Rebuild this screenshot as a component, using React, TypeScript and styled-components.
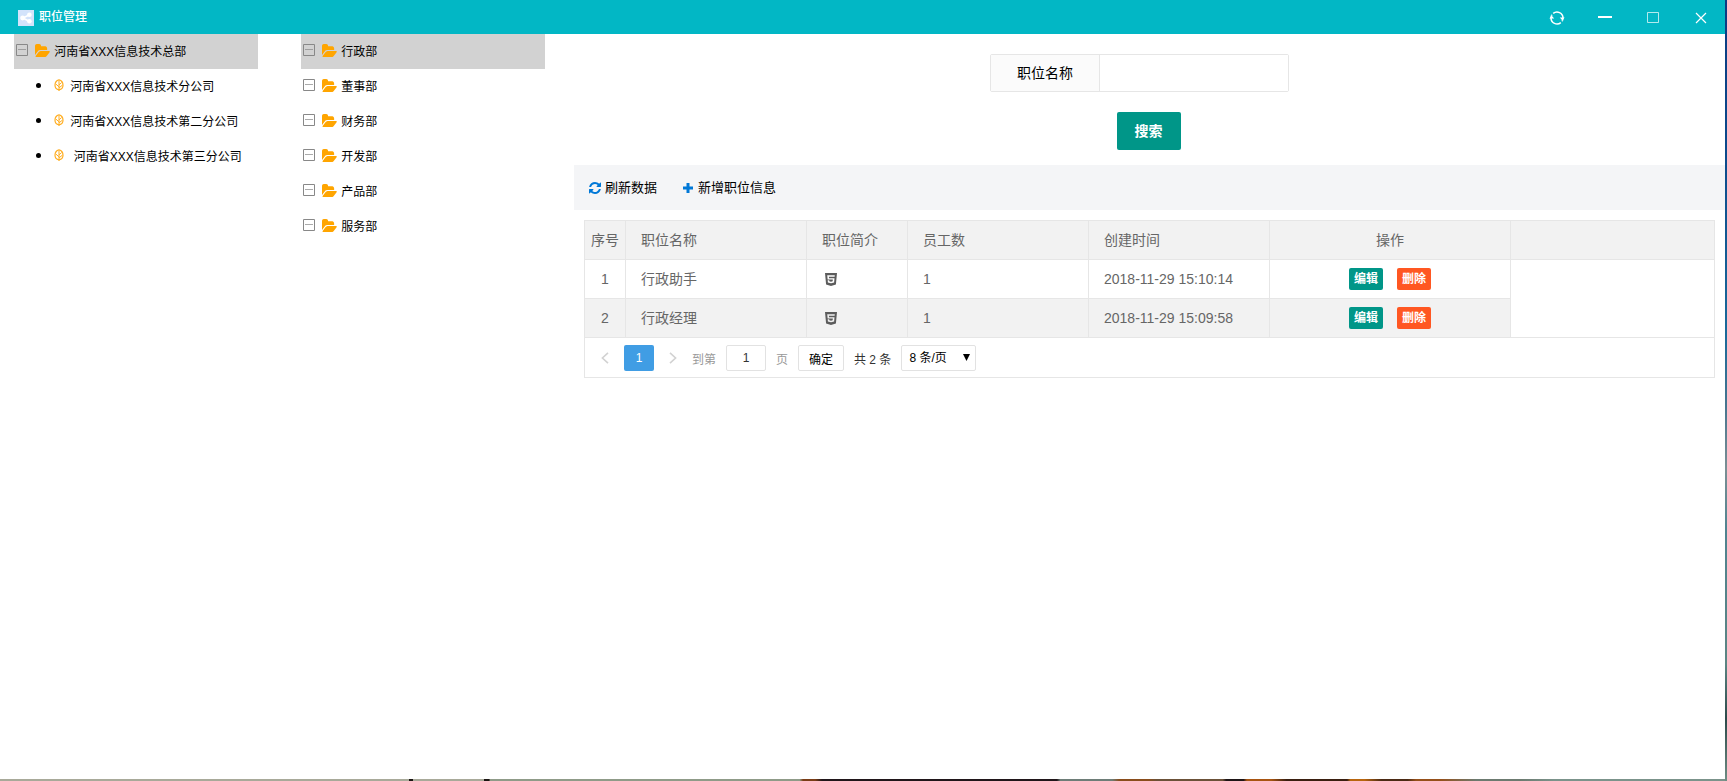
import React, { useState } from 'react';
import styled, { createGlobalStyle } from 'styled-components';
import { FaHtml5 } from 'react-icons/fa';

const GlobalStyle = createGlobalStyle`
  *, *::before, *::after { box-sizing: border-box; }
  html, body { margin: 0; padding: 0; }
  body, button, input, select {
    font-family: "Liberation Sans", "Noto Sans CJK SC", sans-serif;
  }
  body { font-size: 12px; color: #000; }
  ul { margin: 0; padding: 0; list-style: none; }
  button { cursor: pointer; }
`;

const Desktop = styled.div`
  display: flex;
  min-height: 100vh;
  padding: 0 2px 2px 0;
  background:
    linear-gradient(180deg, #0a3b82 0%, #0b4a8c 20%, #1a6a9a 43%, #47758f 52%, #7b8f94 60%, #4f8390 68%, #5b8583 85%, #2c4a4a 92%, #6f8d84 100%) right / 2px 100% no-repeat,
    linear-gradient(90deg,
      #a8a999 0 23.7%, #1a1412 23.7% 23.9%, #a8a999 23.9% 28%, #1a1412 28% 28.3%,
      #8f9b88 28.4% 46.3%, #7a3d17 46.5% 47.2%, #20161a 47.6% 61.2%, #6e7d78 61.4% 64.4%,
      #8a4d1c 64.8% 66.5%, #6b5138 67% 70.8%, #1e1516 71% 72%, #a85512 72.2% 73.6%,
      #3a1f10 74.5% 78%, #b8660f 78.2% 79%, #4b2a14 80% 81.5%, #96501a 82% 83.4%, #6c7a70 85.5% 88%, #7b938b 90% 100%);
`;

const Window = styled.div`
  flex: 1;
  min-width: 0;
  display: flex;
  flex-direction: column;
  background: #fff;
`;

const TitleBar = styled.header`
  display: flex;
  align-items: center;
  height: 34px;
  padding-left: 18px;
  background: #02b7c5;
  color: #fff;
`;

const AppBadge = styled.span`
  display: flex;
  width: 16px;
  height: 16px;
  margin: 2px 5px 0 0;
  background: #d3e3fb;
`;

const Title = styled.h1`
  margin: 0;
  flex: 1;
  font-size: 12px;
  line-height: 34px;
  height: 34px;
  font-weight: 500;
`;

const WindowButton = styled.button`
  display: flex;
  align-items: center;
  justify-content: center;
  width: 48px;
  height: 34px;
  padding: 2px 0 0;
  border: 0;
  background: none;
  color: #fff;
`;

const Columns = styled.main`
  flex: 1;
  display: grid;
  grid-template-columns: minmax(0, 287fr) minmax(0, 287fr) minmax(0, 1151fr);
`;

const Tree = styled.ul`
  && { margin: 0 10% 0 5%; }
`;

const Node = styled.div<{ $selected?: boolean }>`
  display: flex;
  align-items: center;
  height: 35px;
  padding-left: 2px;
  white-space: nowrap;
  background: ${(p) => (p.$selected ? '#d2d2d2' : 'transparent')};
`;

const Toggle = styled.button`
  display: flex;
  width: 12px;
  height: 12px;
  margin: 0 7px 3px 0;
  padding: 0;
  border: 0;
  background: none;
  color: #888;
`;

const FolderSlot = styled.span`
  display: flex;
  width: 15px;
  margin: 0 4px 3px 0;
  color: #ffa500;
`;

const NodeLink = styled.a`
  padding-top: 2px;
  color: #000;
  text-decoration: none;
  white-space: pre;
  line-height: 33px;
`;

const Leaf = styled.li`
  display: flex;
  align-items: center;
  height: 35px;
  padding-left: 22px;
  white-space: nowrap;

  &::before {
    content: "";
    width: 5px;
    height: 5px;
    margin: 0 13px 2px 0;
    border-radius: 50%;
    background: #000;
  }
`;

const LeafSlot = styled.span`
  display: flex;
  width: 10px;
  margin: 0 6px 3px 0;
  color: #ffae22;
`;

const Panel = styled.section`
  min-width: 0;
`;

const SearchForm = styled.form`
  display: flex;
  flex-direction: column;
  align-items: center;
  gap: 20px;
  padding: 20px 0 15px;
`;

const Field = styled.div`
  display: flex;
  width: 299px;
  height: 38px;
  margin-right: 20px;
  border: 1px solid #e6e6e6;
  border-radius: 2px;
`;

const FieldLabel = styled.label`
  width: 109px;
  border-right: 1px solid #e6e6e6;
  background: #fbfbfb;
  font-size: 14px;
  line-height: 36px;
  text-align: center;
`;

const FieldInput = styled.input`
  flex: 1;
  min-width: 0;
  padding: 0 10px;
  border: 0;
  outline: none;
  font-size: 14px;
`;

const SearchButton = styled.button`
  height: 38px;
  margin-right: 2px;
  padding: 0 18px 2px;
  border: 0;
  border-radius: 2px;
  background: #009688;
  color: #fff;
  font-size: 14px;
  font-weight: 700;
`;

const Toolbar = styled.div`
  display: flex;
  align-items: center;
  gap: 25px;
  height: 45px;
  padding: 0 15px 2px;
  background: #f4f5f7;
`;

const ToolButton = styled.button`
  display: flex;
  align-items: center;
  gap: 4px;
  padding: 0;
  border: 0;
  background: none;
  font-size: 13px;
  color: #000;

  svg {
    margin-top: 2px;
    color: #0078d7;
  }
`;

const Grid = styled.div`
  margin: 10px;
  border: 1px solid #e6e6e6;
`;

const Table = styled.table`
  width: 100%;
  table-layout: fixed;
  border-collapse: separate;
  border-spacing: 0;
  color: #666;
  font-size: 14px;
`;

const Col = styled.col<{ $w?: number }>`
  width: ${(p) => (p.$w ? `${p.$w}px` : 'auto')};
`;

const Row = styled.tr<{ $shaded?: boolean }>`
  background: ${(p) => (p.$shaded ? '#f2f2f2' : '#fff')};
`;

const cell = `
  height: 39px;
  border-bottom: 1px solid #e6e6e6;
  border-right: 1px solid #e6e6e6;
  font-weight: 400;
  line-height: 28px;
  white-space: nowrap;
  &:last-child[data-filler] { border-right: 0; }
`;

const HeadCell = styled.th<{ $center?: boolean }>`
  ${cell}
  padding: 0 ${(p) => (p.$center ? 0 : 15)}px;
  text-align: ${(p) => (p.$center ? 'center' : 'left')};
`;

const Cell = styled.td<{ $center?: boolean }>`
  ${cell}
  padding: 0 ${(p) => (p.$center ? 0 : 15)}px;
  text-align: ${(p) => (p.$center ? 'center' : 'left')};
`;

const Filler = styled.td`
  padding: 0;
  background: #fff;
  border-bottom: 1px solid #e6e6e6;
`;

const IntroButton = styled.button`
  display: flex;
  padding: 0 3px;
  border: 0;
  background: none;
  color: #5c5c5c;

  svg {
    width: 12px;
    height: 13px;
  }
`;

const Actions = styled.div`
  display: flex;
  justify-content: center;
  gap: 14px;
`;

const ActionButton = styled.button<{ $danger?: boolean }>`
  width: 34px;
  height: 22px;
  padding: 1px 0 0;
  border: 0;
  border-radius: 2px;
  background: ${(p) => (p.$danger ? '#ff5722' : '#009688')};
  color: #fff;
  font-size: 12px;
  line-height: 21px;
  font-weight: 700;
`;

const Pager = styled.nav`
  display: flex;
  align-items: center;
  height: 39px;
  padding: 1px 0 0 1px;
  color: #999;
  font-size: 12px;
`;

const PageStep = styled.button`
  display: flex;
  align-items: center;
  justify-content: center;
  width: 38px;
  height: 26px;
  padding: 0;
  border: 0;
  background: none;
  color: #d2d2d2;
`;

const CurrentPage = styled.button`
  width: 30px;
  height: 26px;
  padding: 0;
  border: 0;
  border-radius: 2px;
  background: #409de4;
  color: #fff;
  font-size: 12px;
`;

const JumpLabel = styled.label`
  display: flex;
  align-items: center;
  gap: 10px;
  margin-right: 10px;
`;

const JumpInput = styled.input`
  width: 40px;
  height: 26px;
  padding: 0;
  border: 1px solid #e2e2e2;
  border-radius: 2px;
  text-align: center;
  font-size: 12px;
  color: #333;
`;

const JumpButton = styled.button`
  width: 46px;
  height: 26px;
  padding: 0;
  border: 1px solid #e2e2e2;
  border-radius: 2px;
  background: #fff;
  font-size: 12px;
  color: #000;
`;

const Total = styled.span`
  margin: 0 10px;
  color: #333;
`;

const SelectBox = styled.span`
  position: relative;
  display: flex;

  svg {
    position: absolute;
    right: 6px;
    top: 9px;
    pointer-events: none;
    color: #000;
  }
`;

const PageSize = styled.select`
  appearance: none;
  width: 75px;
  height: 26px;
  padding: 0 7px;
  border: 1px solid #e2e2e2;
  border-radius: 2px;
  background: #fff;
  font-size: 12px;
  color: #000;
`;

const ShareIcon = () => (
  <svg width="16" height="16" viewBox="0 0 16 16" fill="#fff" aria-hidden="true">
    <path d="M5 8 11 5M5 8l6 3.200" stroke="#fff" strokeWidth="1.6" />
    <circle cx="4.6" cy="8" r="2.4" />
    <circle cx="11.400" cy="4.800" r="2.300" />
    <circle cx="11.400" cy="11.200" r="2.300" />
  </svg>
);

const ReloadIcon = () => (
  <svg width="16" height="16" viewBox="0 0 16 16" fill="none" stroke="#fff" strokeWidth="1.5" aria-hidden="true">
    <path d="M4.200 3.400A6 6 0 0 1 14 8M11.800 12.600A6 6 0 0 1 2 8" />
    <path d="M2 8A6 6 0 0 1 3 4.700M14 8A6 6 0 0 1 13 11.300" strokeOpacity=".8" />
    <path d="M.4 8.600h4.800L2.600 5.600zM15.600 7.400h-4.800l2.600 3z" fill="#fff" stroke="none" />
  </svg>
);

const MinimizeIcon = () => (
  <svg width="14" height="14" viewBox="0 0 14 14" aria-hidden="true">
    <path d="M0 5h14v2H0z" fill="#fff" />
  </svg>
);

const MaximizeIcon = () => (
  <svg width="12" height="12" viewBox="0 0 12 12" aria-hidden="true">
    <path d="M.5.5h11v10H.5z" fill="none" stroke="#fff" strokeOpacity=".7" />
  </svg>
);

const CloseIcon = () => (
  <svg width="12" height="12" viewBox="0 0 12 12" aria-hidden="true">
    <path d="m1 1 10 10M11 1 1 11" stroke="#fff" strokeWidth="1.2" />
  </svg>
);

const MinusBoxIcon = () => (
  <svg width="12" height="12" viewBox="0 0 12 12" fill="none" stroke="currentColor" aria-hidden="true">
    <path d="M.5.5h11v11H.5z" />
    <path d="M2 5.500h8" strokeOpacity=".7" />
  </svg>
);

const FolderIcon = () => (
  <svg width="15" height="13" viewBox="0 128 1900 1408" preserveAspectRatio="none" fill="currentColor" aria-hidden="true">
    <path d="M1879 952q0 31-31 66l-336 396q-43 51-120.5 86.5t-143.5 35.5h-1088q-34 0-60.5-13t-26.5-43q0-31 31-66l336-396q43-51 120.5-86.5t143.5-35.5h1088q34 0 60.5 13t26.5 43zm-343-344v160h-832q-94 0-197 47.5t-164 119.5l-337 396-5 6q0-4-.5-12.5t-.5-12.5v-960q0-92 66-158t158-66h320q92 0 158 66t66 158v32h544q92 0 158 66t66 158z" />
  </svg>
);

const LeafIcon = () => (
  <svg width="10" height="12" viewBox="0 0 10 12" fill="none" stroke="currentColor" aria-hidden="true">
    <path d="M5 .8C2.500 1.400 1 3.600 1 6.200c0 2.400 1.300 4.200 4 4.600 2.700-.4 4-2.200 4-4.600C9 3.600 7.500 1.400 5 .8z" strokeWidth="1.2" />
    <path d="M5 2v10M5 5.800 7.600 3.600M5 8.800l3.400-2.600M5 7.800 2 5.200" />
  </svg>
);

const RefreshIcon = () => (
  <svg width="12" height="12" viewBox="0 0 1536 1536" fill="currentColor" aria-hidden="true">
    <path d="M1511 928q0 5-1 7-64 268-268 434.5t-478 166.5q-146 0-282.5-55t-243.5-157l-129 129q-19 19-45 19t-45-19-19-45v-448q0-26 19-45t45-19h448q26 0 45 19t19 45-19 45l-137 137q71 66 161 102t187 36q134 0 250-65t186-179q11-17 53-117 8-23 30-23h192q13 0 22.500 9.500t9.500 22.500zm25-800v448q0 26-19 45t-45 19h-448q-26 0-45-19t-19-45 19-45l138-138q-148-137-349-137-134 0-250 65t-186 179q-11 17-53 117-8 23-30 23h-199q-13 0-22.500-9.500t-9.500-22.500v-7q65-268 270-434.500t480-166.500q146 0 284 55.500t245 156.500l130-129q19-19 45-19t45 19 19 45z" />
  </svg>
);

const PlusIcon = () => (
  <svg width="12" height="12" viewBox="0 0 12 12" fill="currentColor" aria-hidden="true">
    <path d="M4.500 1h3v3.500H11v3H7.500V11h-3V7.500H1v-3h3.500z" />
  </svg>
);

const Chevron = ({ d }: { d: string }) => (
  <svg width="8" height="12" viewBox="0 0 8 12" fill="none" stroke="currentColor" strokeWidth="1.6" aria-hidden="true">
    <path d={d} />
  </svg>
);

const branches = ['河南省XXX信息技术分公司', '河南省XXX信息技术第二分公司', ' 河南省XXX信息技术第三分公司'];
const departments = ['行政部', '董事部', '财务部', '开发部', '产品部', '服务部'];
const positions = [
  { id: 1, name: '行政助手', staff: 1, created: '2018-11-29 15:10:14' },
  { id: 2, name: '行政经理', staff: 1, created: '2018-11-29 15:09:58' },
];

const FolderNode = ({ label, selected, onSelect }: { label: string; selected?: boolean; onSelect?: () => void }) => (
  <Node $selected={selected}>
    <Toggle type="button" aria-label={`折叠 ${label}`}><MinusBoxIcon /></Toggle>
    <FolderSlot><FolderIcon /></FolderSlot>
    <NodeLink href="#" onClick={(e) => { e.preventDefault(); onSelect?.(); }}>{label}</NodeLink>
  </Node>
);

export default function App() {
  const [department, setDepartment] = useState(departments[0]);
  const [query, setQuery] = useState('');

  return (
    <>
      <GlobalStyle />
      <Desktop>
        <Window>
          <TitleBar>
            <AppBadge><ShareIcon /></AppBadge>
            <Title>职位管理</Title>
            <WindowButton type="button" aria-label="刷新"><ReloadIcon /></WindowButton>
            <WindowButton type="button" aria-label="最小化"><MinimizeIcon /></WindowButton>
            <WindowButton type="button" aria-label="最大化"><MaximizeIcon /></WindowButton>
            <WindowButton type="button" aria-label="关闭"><CloseIcon /></WindowButton>
          </TitleBar>
          <Columns>
            <Tree>
              <li>
                <FolderNode label="河南省XXX信息技术总部" selected />
                <ul>
                  {branches.map((b) => (
                    <Leaf key={b}>
                      <LeafSlot><LeafIcon /></LeafSlot>
                      <NodeLink href="#">{b}</NodeLink>
                    </Leaf>
                  ))}
                </ul>
              </li>
            </Tree>
            <Tree>
              {departments.map((d) => (
                <li key={d}>
                  <FolderNode label={d} selected={d === department} onSelect={() => setDepartment(d)} />
                </li>
              ))}
            </Tree>
            <Panel>
              <SearchForm onSubmit={(e) => e.preventDefault()}>
                <Field>
                  <FieldLabel htmlFor="position-name">职位名称</FieldLabel>
                  <FieldInput id="position-name" value={query} onChange={(e) => setQuery(e.target.value)} />
                </Field>
                <SearchButton type="submit">搜索</SearchButton>
              </SearchForm>
              <Toolbar>
                <ToolButton type="button"><RefreshIcon />刷新数据</ToolButton>
                <ToolButton type="button"><PlusIcon />新增职位信息</ToolButton>
              </Toolbar>
              <Grid>
                <Table>
                  <colgroup>
                    <Col $w={41} /><Col $w={181} /><Col $w={101} /><Col $w={181} /><Col $w={181} /><Col $w={241} /><Col />
                  </colgroup>
                  <thead>
                    <Row $shaded>
                      <HeadCell $center>序号</HeadCell>
                      <HeadCell>职位名称</HeadCell>
                      <HeadCell>职位简介</HeadCell>
                      <HeadCell>员工数</HeadCell>
                      <HeadCell>创建时间</HeadCell>
                      <HeadCell $center>操作</HeadCell>
                      <HeadCell data-filler aria-hidden="true" />
                    </Row>
                  </thead>
                  <tbody>
                    {positions.map((p, i) => (
                      <Row key={p.id} $shaded={i % 2 === 1}>
                        <Cell $center>{p.id}</Cell>
                        <Cell>{p.name}</Cell>
                        <Cell>
                          <IntroButton type="button" aria-label="查看简介">
                            <FaHtml5 viewBox="0 32 384 448" preserveAspectRatio="none" />
                          </IntroButton>
                        </Cell>
                        <Cell>{p.staff}</Cell>
                        <Cell>{p.created}</Cell>
                        <Cell $center>
                          <Actions>
                            <ActionButton type="button">编辑</ActionButton>
                            <ActionButton type="button" $danger>删除</ActionButton>
                          </Actions>
                        </Cell>
                        {i === 0 && <Filler rowSpan={positions.length} aria-hidden="true" />}
                      </Row>
                    ))}
                  </tbody>
                </Table>
                <Pager aria-label="分页">
                  <PageStep type="button" aria-label="上一页"><Chevron d="M7 .8 1.400 6 7 11.200" /></PageStep>
                  <CurrentPage type="button" aria-current="page">1</CurrentPage>
                  <PageStep type="button" aria-label="下一页"><Chevron d="M1 .8 6.600 6 1 11.200" /></PageStep>
                  <JumpLabel>
                    到第
                    <JumpInput type="text" defaultValue="1" />
                    页
                  </JumpLabel>
                  <JumpButton type="button">确定</JumpButton>
                  <Total>共 2 条</Total>
                  <SelectBox>
                    <PageSize aria-label="每页条数" defaultValue="8">
                      <option value="8">8 条/页</option>
                      <option value="16">16 条/页</option>
                    </PageSize>
                    <svg width="7" height="7" viewBox="0 0 7 7" fill="currentColor" aria-hidden="true">
                      <path d="M0 0h7L3.500 7z" />
                    </svg>
                  </SelectBox>
                </Pager>
              </Grid>
            </Panel>
          </Columns>
        </Window>
      </Desktop>
    </>
  );
}
